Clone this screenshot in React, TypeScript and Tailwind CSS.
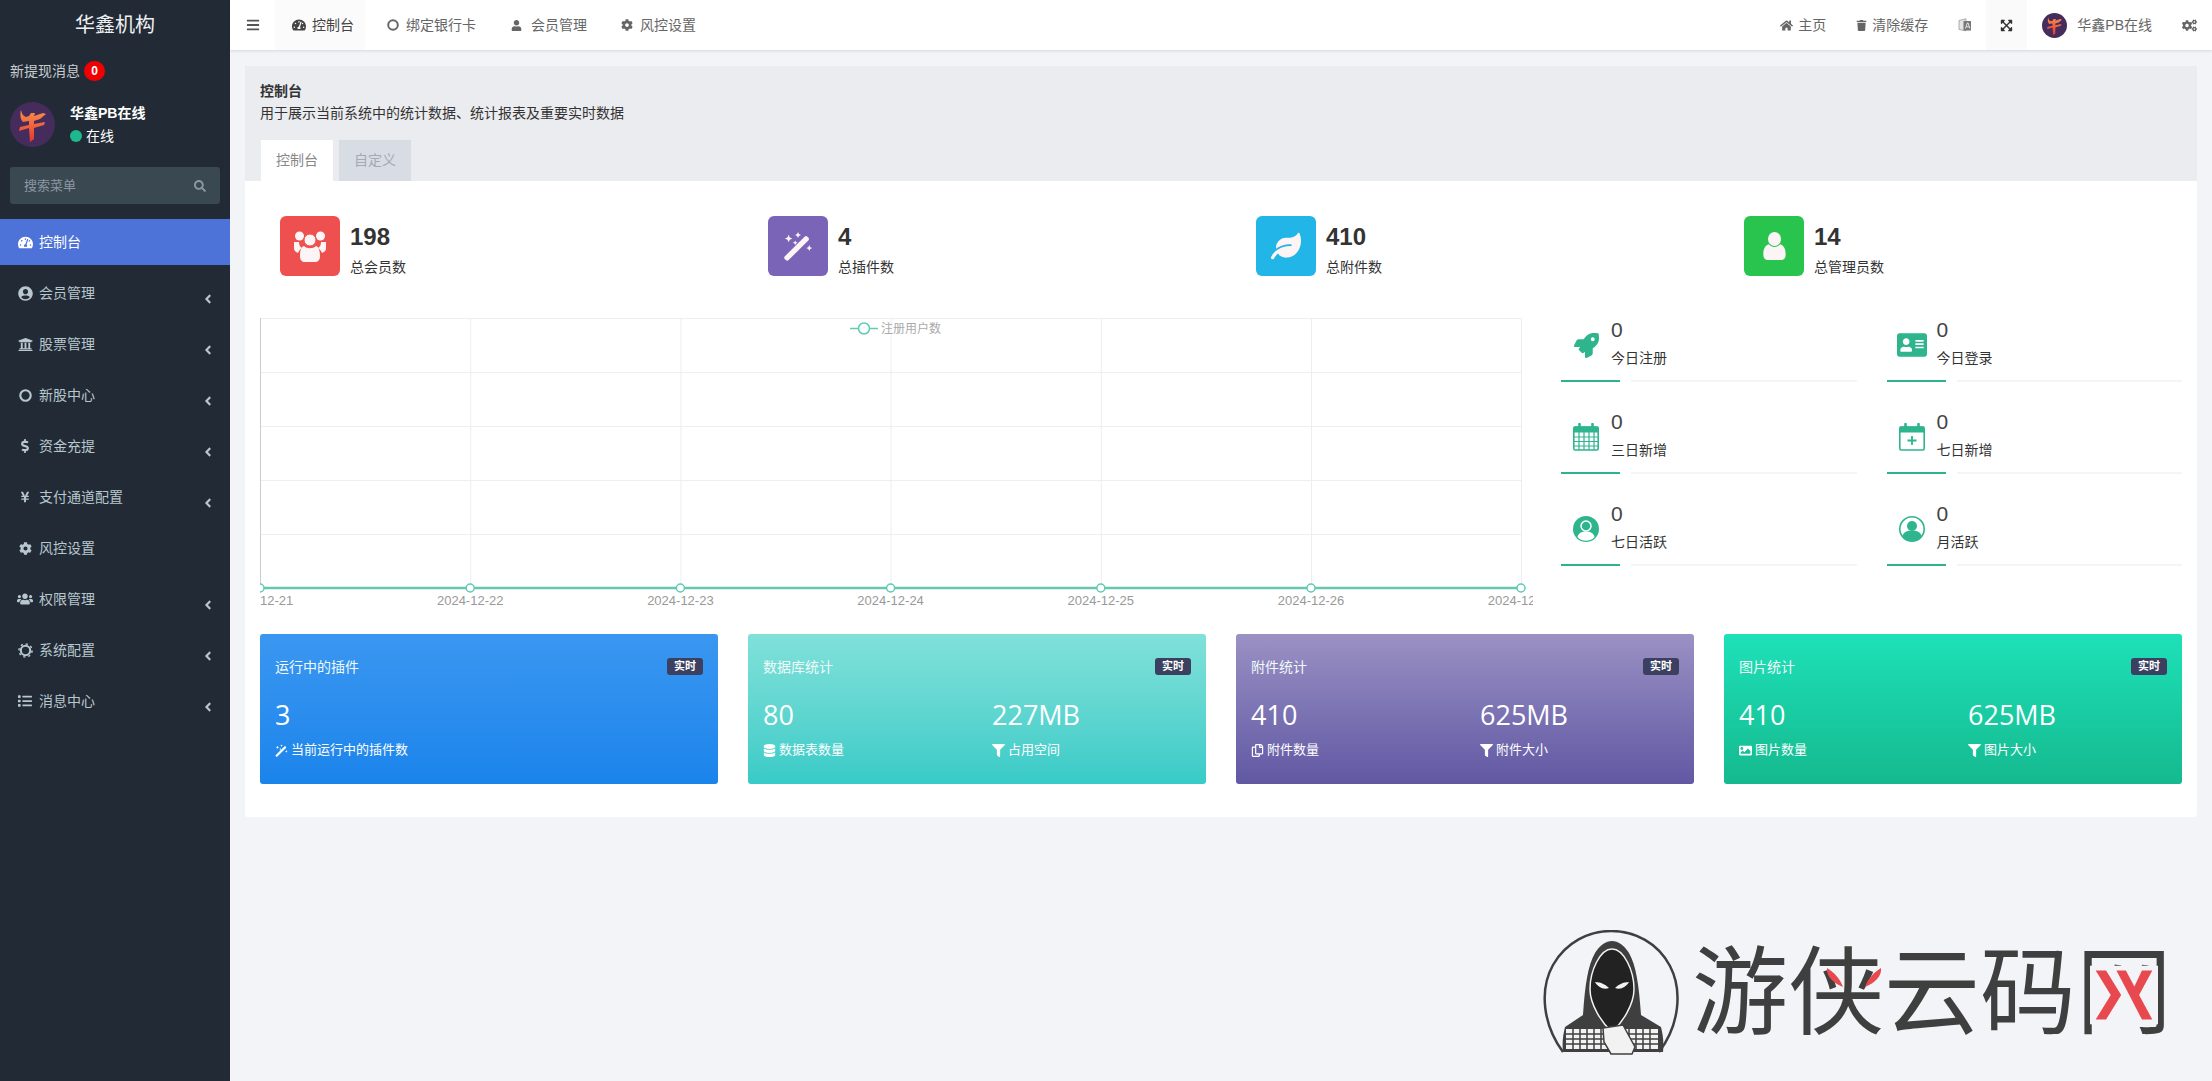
import type { ReactNode } from "react";
import {
  FaAddressCard,
  FaAngleLeft,
  FaBars,
  FaCog,
  FaCogs,
  FaDatabase,
  FaDollarSign,
  FaExpandArrowsAlt,
  FaFilter,
  FaHome,
  FaImage,
  FaLeaf,
  FaList,
  FaRegCopy,
  FaRocket,
  FaSearch,
  FaTachometerAlt,
  FaTrash,
  FaUniversity,
  FaUser,
  FaUserCircle,
  FaUsers,
  FaYenSign,
} from "react-icons/fa";

function GroupIcon() {
  return (
    <svg viewBox="0 0 34 32" className="h-[32px] w-[34px]" fill="currentColor">
      <circle cx="6.5" cy="6" r="4.5" />
      <circle cx="27.5" cy="6" r="4.5" />
      <circle cx="17" cy="10" r="6" stroke="#ee5050" strokeWidth="1" />
      <path d="M1 12h5c0 3 1 5 3 6-2 1-3 3-4 5-3-1-4-3-4-5zM33 12h-5c0 3-1 5-3 6 2 1 3 3 4 5 3-1 4-3 4-5z" />
      <path d="M11 16c3 3 9 3 12 0 3 1 4 5 4 10 0 4-2 6-5 6H12c-3 0-5-2-5-6 0-5 1-9 4-10z" />
    </svg>
  );
}

function PersonIcon() {
  return (
    <svg viewBox="0 0 24 30" className="h-[28px] w-[23px]" fill="currentColor">
      <ellipse cx="12" cy="7.5" rx="7" ry="7.5" />
      <path d="M6 13c3 4 9 4 12 0 4 1 6 5 6 11 0 4-2 6-5 6H5c-3 0-5-2-5-6 0-6 2-10 6-11z" />
    </svg>
  );
}

function WandIcon({ size }: { size: string }) {
  return (
    <svg viewBox="0 0 32 32" className={size} fill="currentColor">
      <path d="M2 27 23 6c1-1 2-1 3 0l1 1c1 1 1 2 0 3L6 31c-1 1-2 1-3 0l-1-1c-1-1-1-2 0-3z" />
      <path d="M6 4l1.200 2.800L10 8 7.200 9.200 6 12 4.800 9.200 2 8l2.800-1.200zM16 1l1 2.200 2.200 1-2.200 1-1 2.200-1-2.200-2.200-1 2.200-1zM28 15l1 2.200 2.200 1-2.200 1-1 2.200-1-2.200-2.200-1 2.200-1zM13 10l.8 1.700 1.700.8-1.700.8-.8 1.700-.8-1.700-1.700-.8 1.700-.8z" />
    </svg>
  );
}

function RingIcon({ size }: { size: string }) {
  return (
    <svg viewBox="0 0 14 14" className={size} fill="none" stroke="currentColor">
      <circle cx="7" cy="7" r="5.600" strokeWidth="2.300" />
    </svg>
  );
}

function GearRingIcon() {
  return (
    <svg viewBox="0 0 16 16" className="h-[15px] w-[15px]" fill="none" stroke="currentColor">
      <circle cx="8" cy="8" r="5" strokeWidth="2.200" />
      <circle cx="8" cy="8" r="7" strokeWidth="1.600" strokeDasharray="2.400 3.100" />
    </svg>
  );
}

function CalendarGridIcon() {
  return (
    <svg viewBox="0 0 26 28" className="h-[28px] w-[26px]" fill="none" stroke="currentColor">
      <rect x="0.8" y="4" width="24.4" height="23" rx="1.5" strokeWidth="1.6" />
      <path d="M1 4h24v5H1z" fill="currentColor" />
      <path d="M6.5 1v6M19.5 1v6" strokeWidth="2.6" strokeLinecap="round" />
      <path d="M1 14h24M1 18.500h24M1 23h24M6 9v18M11 9v18M16 9v18M21 9v18" strokeWidth="1.2" />
    </svg>
  );
}

function CalendarPlusIcon() {
  return (
    <svg viewBox="0 0 26 28" className="h-[28px] w-[26px]" fill="none" stroke="currentColor">
      <rect x="0.8" y="4" width="24.4" height="23" rx="1.5" strokeWidth="1.6" />
      <path d="M1 4h24v5H1z" fill="currentColor" />
      <path d="M6.5 1v6M19.500 1v6" strokeWidth="2.6" strokeLinecap="round" />
      <path d="M13 13v9M8.500 17.500h9" strokeWidth="1.8" />
    </svg>
  );
}

function UserSolidIcon() {
  return (
    <svg viewBox="0 0 26 26" className="h-[26px] w-[26px]">
      <circle cx="13" cy="13" r="13" fill="currentColor" />
      <circle cx="13" cy="10" r="5" fill="none" stroke="#fff" strokeWidth="1.500" />
      <path d="M4.500 21c1-4 4-5.500 8.500-5.500s7.500 1.500 8.500 5.500c-2 2.500-5 3.800-8.500 3.800S6.500 23.500 4.500 21z" fill="#fff" />
    </svg>
  );
}

function UserRingIcon() {
  return (
    <svg viewBox="0 0 26 26" className="h-[26px] w-[26px]">
      <circle cx="13" cy="13" r="12.200" fill="none" stroke="currentColor" strokeWidth="1.600" />
      <circle cx="13" cy="10" r="5" fill="currentColor" />
      <path d="M3.500 20c1-4 4.500-5.500 9.500-5.500s8.500 1.500 9.500 5.500c-2 3-5.500 5-9.500 5s-7.500-2-9.500-5z" fill="currentColor" />
    </svg>
  );
}

const menu: { icon: ReactNode; label: string; arrow: boolean }[] = [
  { icon: <FaUserCircle className="text-[15px]" />, label: "会员管理", arrow: true },
  { icon: <FaUniversity className="text-[15px]" />, label: "股票管理", arrow: true },
  { icon: <RingIcon size="h-[13px] w-[13px]" />, label: "新股中心", arrow: true },
  { icon: <FaDollarSign className="text-[14px]" />, label: "资金充提", arrow: true },
  { icon: <FaYenSign className="text-[12px]" />, label: "支付通道配置", arrow: true },
  { icon: <FaCog className="text-[13px]" />, label: "风控设置", arrow: false },
  { icon: <FaUsers className="text-[16px]" />, label: "权限管理", arrow: true },
  { icon: <GearRingIcon />, label: "系统配置", arrow: true },
  { icon: <FaList className="text-[14px]" />, label: "消息中心", arrow: true },
];

const stats = [
  { icon: <GroupIcon />, bg: "bg-[#ee5050]", value: "198", label: "总会员数" },
  { icon: <WandIcon size="h-[30px] w-[30px]" />, bg: "bg-[#7a64b8]", value: "4", label: "总插件数" },
  { icon: <FaLeaf className="text-[30px]" />, bg: "bg-[#22b5e8]", value: "410", label: "总附件数" },
  { icon: <PersonIcon />, bg: "bg-[#28c44e]", value: "14", label: "总管理员数" },
];

const quick = [
  { icon: <FaRocket className="text-[25px]" />, label: "今日注册" },
  { icon: <FaAddressCard className="text-[30px]" />, label: "今日登录" },
  { icon: <CalendarGridIcon />, label: "三日新增" },
  { icon: <CalendarPlusIcon />, label: "七日新增" },
  { icon: <UserSolidIcon />, label: "七日活跃" },
  { icon: <UserRingIcon />, label: "月活跃" },
];

const cards = [
  {
    bg: "from-[#3a97f1] to-[#1a84eb]",
    title: "运行中的插件",
    cols: [{ value: "3", icon: <WandIcon size="h-[13px] w-[13px]" />, label: "当前运行中的插件数" }],
  },
  {
    bg: "from-[#80e1d9] to-[#37cbc8]",
    title: "数据库统计",
    cols: [
      { value: "80", icon: <FaDatabase />, label: "数据表数量" },
      { value: "227MB", icon: <FaFilter />, label: "占用空间" },
    ],
  },
  {
    bg: "from-[#9b91c4] to-[#6158a3]",
    title: "附件统计",
    cols: [
      { value: "410", icon: <FaRegCopy />, label: "附件数量" },
      { value: "625MB", icon: <FaFilter />, label: "附件大小" },
    ],
  },
  {
    bg: "from-[#1ee1b8] to-[#15b98f]",
    title: "图片统计",
    cols: [
      { value: "410", icon: <FaImage />, label: "图片数量" },
      { value: "625MB", icon: <FaFilter />, label: "图片大小" },
    ],
  },
];

function Avatar({ size }: { size: string }) {
  return (
    <svg viewBox="0 0 45 45" className={size}>
      <defs>
        <linearGradient id="avatar-mark" x1="0" y1="0" x2="0" y2="1">
          <stop offset="0" stopColor="#f7904a" />
          <stop offset="1" stopColor="#e8342f" />
        </linearGradient>
      </defs>
      <circle cx="22.5" cy="22.5" r="22.5" fill="#452c5c" />
      <path
        d="M11 8c1 4 2 6 5 7l3-1 2-3h4l-1 3 9-3 3 1-6 5-6 2v3l11-2-1 3-10 3v11l-4 3-1-14-10 3 1-4 9-2v-4l-6 1c-3-3-3-8-2-12z"
        fill="url(#avatar-mark)"
      />
    </svg>
  );
}

function Sidebar() {
  return (
    <aside className="w-[230px] shrink-0 bg-[#222b35] text-[14px] text-[#b8c7ce]">
      <div className="flex h-[50px] items-center justify-center text-[20px] text-[#eef0f2]">华鑫机构</div>
      <div className="flex h-[42px] items-center pl-[10px] text-[#c6ccd0]">
        新提现消息
        <span className="ml-[4px] flex h-[20px] w-[21px] items-center justify-center rounded-full bg-[#f00000] text-[12px] font-bold text-white">
          0
        </span>
      </div>
      <div className="mt-[10px] flex h-[45px] items-center pl-[10px]">
        <Avatar size="h-[45px] w-[45px]" />
        <div className="ml-[15px]">
          <div className="text-[14px] leading-[20px] font-bold text-white">华鑫PB在线</div>
          <div className="mt-[3px] flex items-center text-[14px] leading-[20px] text-white">
            <span className="mr-[4px] h-[12px] w-[12px] rounded-full bg-[#1fb88e]" />
            在线
          </div>
        </div>
      </div>
      <div className="mx-[10px] mt-[20px] flex h-[37px] items-center justify-between rounded-[3px] bg-[#3a4852] pr-[14px] pl-[14px] text-[13px] text-[#8a98a2]">
        搜索菜单
        <FaSearch className="text-[12px]" />
      </div>
      <div className="mt-[15px] flex h-[46px] items-center bg-[#4e73d8] text-white">
        <span className="flex w-[39px] justify-center pl-[11px]">
          <FaTachometerAlt className="text-[15px]" />
        </span>
        控制台
      </div>
      <div className="mt-[5px] flex flex-col gap-[5px]">
        {menu.map((item) => (
          <div key={item.label} className="relative flex h-[46px] items-center">
            <span className="flex w-[39px] justify-center pl-[11px]">{item.icon}</span>
            {item.label}
            {item.arrow && <FaAngleLeft className="absolute top-[22px] left-[201px] text-[14px]" />}
          </div>
        ))}
      </div>
    </aside>
  );
}

function TranslateIcon() {
  return (
    <svg viewBox="0 0 14 14" className="h-[14px] w-[14px]">
      <path d="M1 2.5 8 .8v12L1 11.5z" fill="#e4e4e4" stroke="#999" strokeWidth="0.8" />
      <path d="M5.5 3h7.5v9.5H5.5z" fill="#777" />
      <path d="M7.5 10.5 9.3 5h.8l1.8 5.5M8.2 8.8h3" stroke="#fff" strokeWidth="0.8" fill="none" />
    </svg>
  );
}

function TopBar() {
  return (
    <header className="relative z-10 flex h-[50px] shrink-0 items-center justify-between bg-white text-[14px] text-[#666] shadow-[0_1px_3px_rgba(0,0,0,0.12)]">
      <div className="flex h-full items-center">
        <FaBars className="ml-[16px] text-[14px] text-[#555]" />
        <div className="ml-[15px] flex h-full items-center bg-[#fbfbfb] pr-[11px] pl-[17px] text-[#444]">
          <FaTachometerAlt className="mr-[6px] text-[14px]" />
          控制台
        </div>
        <div className="ml-[22px] flex items-center">
          <RingIcon size="mr-[7px] h-[12px] w-[12px]" />
          绑定银行卡
        </div>
        <div className="ml-[35px] flex items-center">
          <FaUser className="mr-[9px] text-[11px]" />
          会员管理
        </div>
        <div className="ml-[34px] flex items-center">
          <FaCog className="mr-[7px] text-[12px]" />
          风控设置
        </div>
      </div>
      <div className="flex h-full items-center pr-[15px]">
        <div className="flex items-center">
          <FaHome className="mr-[5px] text-[13px]" />
          主页
        </div>
        <div className="ml-[30px] flex items-center">
          <FaTrash className="mr-[5px] text-[11px]" />
          清除缓存
        </div>
        <div className="ml-[30px]">
          <TranslateIcon />
        </div>
        <div className="ml-[14px] flex h-full w-[41px] items-center justify-center bg-[#fafafa] text-[#333]">
          <FaExpandArrowsAlt className="text-[13px]" />
        </div>
        <div className="ml-[15px] flex items-center">
          <Avatar size="h-[25px] w-[25px]" />
          <span className="ml-[10px]">华鑫PB在线</span>
        </div>
        <FaCogs className="ml-[30px] text-[15px]" />
      </div>
    </header>
  );
}

function Chart() {
  const xs = [0, 210.2, 420.4, 630.6, 840.8, 1051, 1261];
  const days = ["2024-12-21", "2024-12-22", "2024-12-23", "2024-12-24", "2024-12-25", "2024-12-26", "2024-12-27"];
  const ys = [13, 67, 121, 175, 229];
  return (
    <svg width="1273" height="329" className="block">
      {ys.map((y) => (
        <line key={y} x1="0" x2="1261" y1={y + 0.5} y2={y + 0.5} stroke="#eeeeee" />
      ))}
      {xs.map((x) => (
        <line key={x} x1={x + 0.5} x2={x + 0.5} y1="13" y2="283" stroke={x === 0 ? "#cccccc" : "#eeeeee"} />
      ))}
      <line x1="0" x2="1261" y1="283" y2="283" stroke="#66c6b1" strokeWidth="2.5" />
      {xs.map((x) => (
        <circle key={x} cx={x} cy="283" r="4" fill="#ffffff" stroke="#5ecbb3" strokeWidth="1.5" />
      ))}
      {xs.map((x, i) => (
        <text key={x} x={x} y="300" textAnchor="middle" fontSize="13" fill="#999999">
          {days[i]}
        </text>
      ))}
      <line x1="590" x2="618" y1="23.5" y2="23.5" stroke="#5ecbb3" strokeWidth="1.5" />
      <circle cx="604" cy="23.5" r="5.5" fill="#ffffff" stroke="#5ecbb3" strokeWidth="1.5" />
      <text x="621" y="28" fontSize="12" fill="#aaaaaa">
        注册用户数
      </text>
    </svg>
  );
}

function Watermark() {
  return (
    <div className="absolute top-[930px] left-[1311px] flex h-[125px] items-center">
      <svg viewBox="0 0 141 125" className="h-[125px] w-[141px] shrink-0">
        <path d="M22 122C2 95-2 60 12 35 25 12 48 1 70 1c24 0 47 12 59 35 13 25 9 60-11 86" fill="none" stroke="#3f3f3f" strokeWidth="2.5" />
        <path d="M42 85c2-30 5-50 12-62 5-8 11-12 17-12s12 4 17 12c7 12 10 32 12 62l20 12c2 8 3 16 2 25H22c-1-9 0-17 2-25z" fill="#3f3f3f" />
        <path d="M71 19c-12 0-22 22-22 40 0 16 12 34 22 43 10-9 22-27 22-43 0-18-10-40-22-40z" fill="#222" stroke="#f2f2f2" strokeWidth="1.5" />
        <path d="M54 52c6 0 11 3 14 6-6 2-11-1-14-6zM88 52c-6 0-11 3-14 6 6 2 11-1 14-6z" fill="#f2f2f2" />
        <path d="M25 99h92v20H25z" fill="#f2f2f2" />
        <path d="M25 104h92M25 109h92M25 114h92M32 99v20M39 99v20M46 99v20M53 99v20M60 99v20M88 99v20M95 99v20M102 99v20M109 99v20" stroke="#3f3f3f" strokeWidth="1.5" />
        <path d="M62 98l20-3 12 22 -3 7H70l-7-12z" fill="#f2f2f2" stroke="#3f3f3f" strokeWidth="1.5" />
      </svg>
      <div className="relative ml-[10px] text-[96px] leading-none font-normal whitespace-nowrap text-[#3f3f3f]">
        游侠云码网
        <svg viewBox="0 0 72 62" className="absolute top-[20px] left-[398px] h-[60px] w-[68px]">
          <rect x="0" y="0" width="72" height="62" fill="#f2f4f7" />
          <path d="M6 5h11l16 26-16 26H6l16-26zM28 5h10l9 17 8-17h11L52 31l14 26H55L38 24z" fill="#e8494f" />
        </svg>
        <svg viewBox="0 0 60 20" className="absolute top-[23px] left-[132px] h-[20px] w-[60px]">
          <path d="M3 0c-1 8 6 15 16 19C16 11 11 5 3 0zM57 0c1 8-6 15-16 19 3-8 8-14 16-19z" fill="#e8494f" />
        </svg>
      </div>
    </div>
  );
}

export default function App() {
  return (
    <div className='flex h-[1081px] overflow-hidden bg-[#f2f4f7] font-["Liberation_Sans","Noto_Sans_CJK_SC",sans-serif] text-[14px] text-[#333]'>
      <Sidebar />
      <main className="relative flex min-w-0 flex-1 flex-col">
        <TopBar />
        <div className="mx-[15px] mt-[16px] h-[751px]">
          <section className="flex h-[115px] flex-col bg-[#ebecef] pl-[15px]">
            <div className="mt-[15px] text-[14px] leading-[20px] font-bold text-[#333]">控制台</div>
            <div className="mt-[2px] text-[14px] leading-[20px] text-[#333]">用于展示当前系统中的统计数据、统计报表及重要实时数据</div>
            <div className="mt-[17px] ml-[1px] flex h-[41px] gap-[6px]">
              <div className="flex w-[72px] items-center justify-center bg-white text-[#888]">控制台</div>
              <div className="flex w-[72px] items-center justify-center bg-[#d8dde4] text-[#a3aab3]">自定义</div>
            </div>
          </section>
          <section className="h-[636px] rounded-b-[3px] bg-white pt-[35px]">
            <div className="grid h-[60px] grid-cols-4">
              {stats.map((s) => (
                <div key={s.label} className="flex pl-[35px]">
                  <div className={`flex h-[60px] w-[60px] items-center justify-center rounded-[6px] text-[#fdf5f5] ${s.bg}`}>{s.icon}</div>
                  <div className="ml-[10px]">
                    <div className="mt-[7px] text-[24px] leading-[28px] font-bold text-[#333]">{s.value}</div>
                    <div className="mt-[6px] leading-[20px]">{s.label}</div>
                  </div>
                </div>
              ))}
            </div>
            <div className="mt-[29px] flex h-[329px]">
              <div className="w-[1301px] shrink-0 pl-[15px]">
                <Chart />
              </div>
              <div className="grid flex-1 grid-cols-2 content-start gap-x-[30px] px-[15px]">
                {quick.map((q) => (
                  <div key={q.label} className="h-[92px] pt-[13px]">
                    <div className="flex">
                      <div className="flex h-[50px] w-[50px] items-center justify-center pt-[4px] text-[#2fb58e]">{q.icon}</div>
                      <div>
                        <div className="text-[21px] leading-[24px] text-[#444]">0</div>
                        <div className="mt-[6px] leading-[20px]">{q.label}</div>
                      </div>
                    </div>
                    <div className="mt-[12px] flex h-[2px] gap-[11px]">
                      <div className="w-[59px] bg-[#2fb38e]" />
                      <div className="flex-1 bg-[#f5f5f5]" />
                    </div>
                  </div>
                ))}
              </div>
            </div>
            <div className="grid grid-cols-4">
              {cards.map((c) => (
                <div key={c.title} className="px-[15px]">
                  <div className={`h-[150px] overflow-hidden rounded-[3px] bg-linear-to-b px-[15px] text-white ${c.bg}`}>
                    <div className="flex items-start justify-between pt-[24px]">
                      <span className="text-[14px] leading-[18px] text-[#f0fafa]">{c.title}</span>
                      <span className="flex h-[17px] w-[36px] items-center justify-center rounded-[3px] bg-[#3b3f60] text-[11px] font-bold text-white">实时</span>
                    </div>
                    <div className="flex">
                      {c.cols.map((col) => (
                        <div key={col.label} className="w-[229px] shrink-0">
                          <div className="mt-[20px] font-['Open_Sans','Liberation_Sans',sans-serif] text-[27px] leading-[38px]">{col.value}</div>
                          <div className="mt-[7px] flex items-center gap-[3px] text-[13px] leading-[18px]">
                            <span className="text-[13px]">{col.icon}</span>
                            {col.label}
                          </div>
                        </div>
                      ))}
                    </div>
                  </div>
                </div>
              ))}
            </div>
          </section>
        </div>
        <Watermark />
      </main>
    </div>
  );
}
